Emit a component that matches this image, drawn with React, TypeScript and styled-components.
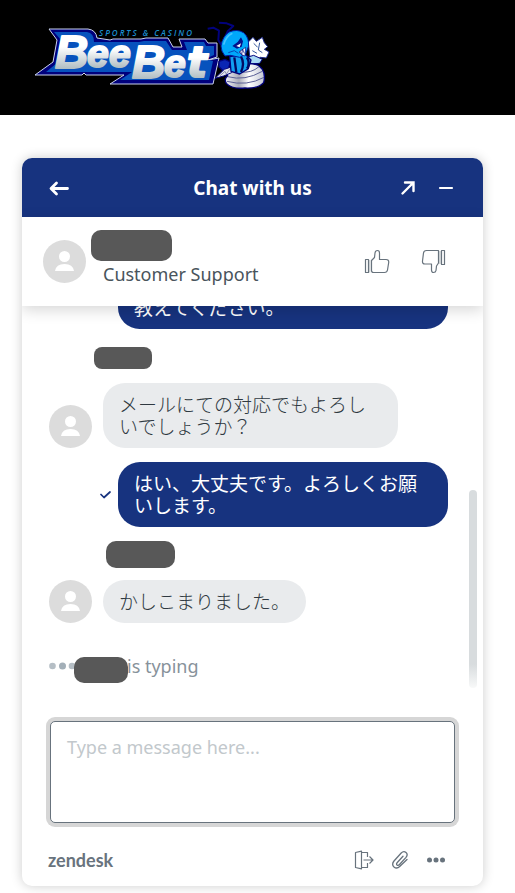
import React from "react";
import styled, { createGlobalStyle } from "styled-components";

const NAVY = "#17337f";
const SLATE = "#68737d";

const GlobalStyle = createGlobalStyle`
  *, *::before, *::after { box-sizing: border-box; }
  body {
    margin: 0;
    background: #fff;
    color: #2f3941;
    font-family: "Noto Sans", "Open Sans", "Noto Sans CJK JP", sans-serif;
    font-size: 18px;
    line-height: 22px;
  }
  button, textarea { font: inherit; color: inherit; }
`;

const Page = styled.div`
  display: flex;
  flex-direction: column;
  height: 100vh;
  min-height: 640px;
`;

const SiteHeader = styled.header`
  flex: none;
  padding: 20px 30px 22px;
  height: 115px;
  background: #000;
`;

const Main = styled.main`
  flex: 1;
  min-height: 0;
  display: flex;
  padding: 43px 32px 7px 22px;
`;

const Card = styled.section`
  flex: 1;
  min-width: 0;
  display: flex;
  flex-direction: column;
  border-radius: 10px;
  overflow: hidden;
  background: #fff;
  box-shadow: 0 0 12px rgba(0, 0, 0, 0.2);
`;

const TitleBar = styled.div`
  flex: none;
  display: grid;
  grid-template-columns: 76px 1fr 76px;
  align-items: center;
  height: 59px;
  padding: 0 29px 0 25px;
  background: ${NAVY};
  color: #fff;
`;

const Title = styled.h1`
  margin: 0;
  padding-left: 4px;
  text-align: center;
  font-size: 19px;
  line-height: 22px;
  font-weight: 700;
`;

const Actions = styled.div<{ $gap: number }>`
  display: flex;
  align-items: center;
  justify-content: flex-end;
  gap: ${(p) => p.$gap}px;
`;

const IconButton = styled.button`
  display: flex;
  width: max-content;
  padding: 0;
  border: 0;
  background: none;
  cursor: pointer;
`;

const AgentBar = styled.div`
  flex: none;
  position: relative;
  z-index: 1;
  display: flex;
  align-items: center;
  gap: 17px;
  height: 89px;
  padding: 0 36px 0 21px;
  background: #fff;
  box-shadow: 0 4px 14px rgba(0, 0, 0, 0.16);
`;

const AgentInfo = styled.div`
  flex: 1;
  display: flex;
  flex-direction: column;
  gap: 2px;
  padding-bottom: 8px;
`;

const NamePill = styled.span<{ $w: number; $h: number; $shift?: number }>`
  display: block;
  width: ${(p) => p.$w}px;
  height: ${(p) => p.$h}px;
  margin-left: ${(p) => p.$shift ?? 0}px;
  border-radius: ${(p) => (p.$h > 24 ? 10 : 8)}px;
  background: #585858;
`;

const Role = styled.div`
  color: #49545c;
`;

const Scroller = styled.div`
  flex: 1;
  min-height: 0;
  position: relative;
  overflow: hidden;
  display: flex;
  flex-direction: column;
  justify-content: flex-end;
  padding: 0 35px 38px 27px;
`;

const Row = styled.div<{ $own?: boolean }>`
  flex: none;
  display: flex;
  align-items: ${(p) => (p.$own ? "center" : "flex-end")};
  justify-content: ${(p) => (p.$own ? "flex-end" : "flex-start")};
  gap: ${(p) => (p.$own ? 7 : 11)}px;
`;

const Bubble = styled.p<{ $own?: boolean; $fill?: boolean }>`
  margin: 0;
  padding: 10px 16px 11px;
  flex: ${(p) => (p.$fill ? "1" : "0 1 auto")};
  max-width: ${(p) => (p.$own ? 330 : 295)}px;
  border-radius: 22px;
  background: ${(p) => (p.$own ? NAVY : "#e9ebed")};
  color: ${(p) => (p.$own ? "#fff" : "#2f3941")};
  font-family: "Noto Sans CJK JP", sans-serif;
  font-size: 19px;
  font-weight: ${(p) => (p.$own ? 400 : 300)};
  word-break: break-all;
`;

const Sender = styled.div<{ $indent: number; $top: number; $bottom: number }>`
  flex: none;
  padding: ${(p) => `${p.$top}px 0 ${p.$bottom}px ${p.$indent}px`};
`;

const Spacer = styled.div`
  flex: none;
  height: 14px;
`;

const Typing = styled.div`
  flex: none;
  position: relative;
  display: flex;
  align-items: center;
  margin-top: 30px;
  color: #87929b;
`;

const TypingName = styled.div`
  width: 53px;
  margin: 4px 0 -4px -3px;
`;

const Thumb = styled.div`
  position: absolute;
  right: 6px;
  bottom: 29px;
  width: 8px;
  height: 198px;
  border-radius: 4px;
  background: linear-gradient(#d8dcde 88%, #f8f9f9);
`;

const Composer = styled.label`
  flex: none;
  display: block;
  padding: 4px 28px 0;
`;

const Input = styled.textarea`
  display: block;
  width: 100%;
  height: 102px;
  padding: 14px 16px;
  border: 1px solid ${SLATE};
  border-radius: 5px;
  box-shadow: 0 0 0 4px #d6d6d6;
  outline: none;
  resize: none;
  background: #fff;
  line-height: 22px;
  &::placeholder { color: #c2c8cc; opacity: 1; }
`;

const Footer = styled.footer`
  flex: none;
  display: flex;
  align-items: center;
  justify-content: space-between;
  height: 63px;
  padding: 10px 37px 0 26px;
  color: ${SLATE};
`;

const Brand = styled.a`
  color: ${SLATE};
  text-decoration: none;
  font-family: Lato, sans-serif;
  font-weight: 700;
  font-size: 18px;
`;

const Logo = () => (
  <svg width="244" height="73" viewBox="30 20 244 73" role="img" aria-label="BeeBet Sports & Casino">
    <defs>
      <linearGradient id="metal" x1="0" y1="0" x2="0" y2="1">
        <stop offset="0.4" stopColor="#fff" />
        <stop offset="0.9" stopColor="#a3b2b8" />
      </linearGradient>
      <linearGradient id="drill" x1="0" y1="0" x2="1" y2="0">
        <stop offset="0" stopColor="#f4f4fa" />
        <stop offset="0.35" stopColor="#a9abb8" />
        <stop offset="0.6" stopColor="#fff" />
        <stop offset="1" stopColor="#c3c6d4" />
      </linearGradient>
    </defs>
    <path
      d="M49 29H88Q96 30 97 38L110 40L113 39H141L146 38H168L173 47H182L179 39H205L208 43H217V57L208 60L219 58L213 84H110L124 75H86L84 73L82 75H35L53 62L57 40Z"
      fill="#00007c"
      stroke="#c9d2ec"
      strokeWidth="1"
    />
    <path
      d="M54 32H87Q94 33 94 42H139L144 41H166L172 50H187L184 42H204L206 46H214V55L205 59L213 61L209 80H120L132 72H46L57 63L61 40Z"
      fill="#0752bd"
    />
    <g fontFamily="Liberation Sans, sans-serif" fontStyle="italic" fontWeight="700" fill="url(#metal)" stroke="url(#metal)" strokeWidth="2" strokeLinejoin="round">
      <text x="55" y="68" fontSize="46">B</text>
      <text x="87" y="67" fontSize="39">e</text>
      <text x="109" y="67" fontSize="39">e</text>
      <text x="132" y="78" fontSize="46">B</text>
      <text x="164" y="77" fontSize="39">e</text>
      <text x="187" y="77" fontSize="42" fontFamily="DejaVu Sans, sans-serif">t</text>
    </g>
    <text x="99" y="36" fontFamily="Open Sans, sans-serif" fontStyle="italic" fontWeight="600" fontSize="8" letterSpacing="2" fill="#1b8fd0">
      SPORTS &amp; CASINO
    </text>
    <g transform="translate(145 10) scale(0.33333)" strokeLinejoin="round">
      <path d="M228 104L220 90L222 62L205 53L188 56M240 82L248 64L265 48L245 40L222 38" fill="none" stroke="#02027c" strokeWidth="6" />
      <path d="M310 96L324 82L334 94L352 82L358 98L368 110L358 118L372 126L364 144L346 142L336 150L314 138Z" fill="#fff" stroke="#1b2a8c" strokeWidth="3" />
      <path d="M326 100L338 112M344 98L340 120L352 128M322 122L336 130" fill="none" stroke="#32549c" strokeWidth="3" />
      <path d="M306 142L326 136L352 148L344 160L318 162Z" fill="#a9d9f4" stroke="#02027c" strokeWidth="3" />
      <path d="M222 154L240 148L256 156L250 178L234 182L222 170Z" fill="#0a25b4" stroke="#02027c" strokeWidth="4" />
      <path d="M244 180Q300 150 340 166L352 178Q362 194 356 218Q340 236 300 234Q260 238 244 220Q236 206 248 198Z" fill="url(#drill)" stroke="#02027c" strokeWidth="4" />
      <path d="M248 200Q300 214 352 184M246 214Q306 230 357 202M286 186Q320 190 342 170" fill="none" stroke="#5a5f96" strokeWidth="3" />
      <path d="M210 205L238 178L268 168L260 188L236 198Z" fill="#e5e6ee" stroke="#02027c" strokeWidth="3" />
      <path d="M224 198L240 184L244 192L254 178" fill="none" stroke="#8a8eac" strokeWidth="3" />
      <path d="M254 140L300 132L318 150L310 176L284 192L258 184Z" fill="#12a0f0" stroke="#02027c" strokeWidth="4" />
      <path d="M268 142L274 188M288 140Q300 160 288 186M306 142Q316 160 306 176" fill="none" stroke="#020a62" strokeWidth="7" />
      <path d="M228 108Q232 80 252 66Q276 56 296 68Q314 84 310 110L302 132L284 142L256 136L240 138Q228 124 228 108Z" fill="#00a8fa" stroke="#0218a0" strokeWidth="3" />
      <path d="M236 104Q242 80 262 70" fill="none" stroke="#48c4ff" strokeWidth="5" />
      <path d="M262 108L278 96L288 82L294 94L290 110L276 116Z" fill="#03118b" />
      <path d="M274 108L288 100L284 112Z" fill="#fff" />
      <path d="M282 126L302 112L300 138L290 134Z" fill="#fff" stroke="#02027c" strokeWidth="2" />
      <path d="M286 124L290 134L293 118L298 130" fill="none" stroke="#02027c" strokeWidth="2" />
      <path d="M250 128L268 122L280 130" fill="none" stroke="#0645b4" strokeWidth="3" />
    </g>
  </svg>
);

const Avatar = () => (
  <svg width="43" height="43" viewBox="0 0 43 43" role="img" aria-label="Agent">
    <circle cx="21.5" cy="21.5" r="21.5" fill="#dcdcdc" />
    <circle cx="21.5" cy="16.5" r="5.5" fill="#fff" />
    <path d="M12 31Q13 24 21.5 24T31 31Z" fill="#fff" />
  </svg>
);

const BackIcon = () => (
  <svg width="26" height="20" viewBox="0 0 26 20" fill="none" stroke="#fff" strokeWidth="2.8" strokeLinecap="round" strokeLinejoin="round">
    <path d="M20.500 10.500H4.500M9.500 5L4 10.500L9.500 16" />
  </svg>
);

const PopoutIcon = () => (
  <svg width="16" height="16" viewBox="0 0 16 16" fill="none" stroke="#fff" strokeWidth="2.4" strokeLinecap="round">
    <path d="M2.500 13.500L13 3M5 2.500H13.500V11" />
  </svg>
);

const MinimizeIcon = () => (
  <svg width="16" height="16" viewBox="0 0 16 16" stroke="#fff" strokeWidth="2.2" strokeLinecap="round">
    <path d="M2 8H14" />
  </svg>
);

const ThumbUpIcon = () => (
  <svg width="26" height="26" viewBox="0 0 26 26" fill="none" stroke={SLATE} strokeWidth="1.2" strokeLinejoin="round">
    <path d="M4.500 11H6.500V23.500H4.500Z" fill="#d8dcde" stroke="none" />
    <path d="M1.500 10.500H4.500V23.500H1.500Z" />
    <path d="M7.500 11.500L10.500 8.500L11 4Q11.300 1.500 13.500 1.500Q15.500 1.500 15.500 4V10.500H22Q25 10.500 24.700 13.500L23.500 21Q23 23.500 20.500 23.500H9.500Q7.500 23.500 7.500 21.500Z" />
  </svg>
);

const ThumbDownIcon = () => (
  <svg width="26" height="26" viewBox="0 0 26 26" fill="none" stroke={SLATE} strokeWidth="1.2" strokeLinejoin="round">
    <path d="M17.500 2H20V15H17.500Z" fill="#d8dcde" stroke="none" />
    <path d="M20.500 1.500H23.500V15.500H20.500Z" />
    <path d="M17.500 14L15.500 17L15 21.500Q14.700 23.500 12.500 23.500Q10.500 23.500 10.500 21V15H4Q1.200 15 1.500 12L2.500 4Q2.800 1.500 5.500 1.500H17.500Z" />
  </svg>
);

const CheckIcon = () => (
  <svg width="11" height="9" viewBox="0 0 11 9" fill="none" stroke={NAVY} strokeWidth="1.7" strokeLinecap="round" strokeLinejoin="round" role="img" aria-label="Sent">
    <path d="M1 4.500L4 7.500L10 2" />
  </svg>
);

const TypingDots = () => (
  <svg width="28" height="8" viewBox="0 0 28 8">
    <circle cx="3.500" cy="4" r="3.300" fill="#b5bec5" />
    <circle cx="13.500" cy="4" r="3.500" fill="#a3afb8" />
    <circle cx="23" cy="4" r="3.300" fill="#b5bec5" />
  </svg>
);

const ExitIcon = () => (
  <svg width="20" height="20" viewBox="0 0 20 20" fill="none" stroke={SLATE} strokeWidth="1.2" strokeLinejoin="round">
    <path d="M1.500 2.500L7.500 1.200V18.800L1.500 17.500Z" />
    <path d="M7.500 2.500H13.500V7M13.500 13V17.500H7.500M9.500 10H19M15.500 6.500L19 10L15.500 13.500" />
  </svg>
);

const ClipIcon = () => (
  <svg width="18" height="20" viewBox="0 0 18 20" fill="none" stroke={SLATE} strokeWidth="1.3" strokeLinecap="round">
    <path d="M12 6.200L6.300 12.500Q5 14 6 15Q7.200 16 8.500 14.500L15 7.400Q17.300 4.600 15 2.500Q12.700 0.500 10.200 3L3 11Q0.300 14.300 3 17Q5.800 19.300 8.700 16.500L16 9.500" />
  </svg>
);

const MoreIcon = () => (
  <svg width="20" height="20" viewBox="0 0 20 20" fill={SLATE}>
    <circle cx="3.500" cy="10" r="2.500" />
    <circle cx="10" cy="10" r="2.500" />
    <circle cx="16.500" cy="10" r="2.500" />
  </svg>
);

export default function App() {
  return (
    <>
      <GlobalStyle />
      <Page>
        <SiteHeader>
          <Logo />
        </SiteHeader>
        <Main>
          <Card>
            <TitleBar>
              <IconButton aria-label="Back"><BackIcon /></IconButton>
              <Title>Chat with us</Title>
              <Actions $gap={22}>
                <IconButton aria-label="Open in new window"><PopoutIcon /></IconButton>
                <IconButton aria-label="Minimize"><MinimizeIcon /></IconButton>
              </Actions>
            </TitleBar>
            <AgentBar>
              <Avatar />
              <AgentInfo>
                <NamePill $w={81} $h={31} $shift={-12} />
                <Role>Customer Support</Role>
              </AgentInfo>
              <Actions $gap={31}>
                <IconButton aria-label="Rate good"><ThumbUpIcon /></IconButton>
                <IconButton aria-label="Rate bad"><ThumbDownIcon /></IconButton>
              </Actions>
            </AgentBar>
            <Scroller>
              <Row $own>
                <Bubble $own $fill>教えてください。</Bubble>
              </Row>
              <Sender $indent={45} $top={18} $bottom={14}>
                <NamePill $w={58} $h={22} />
              </Sender>
              <Row>
                <Avatar />
                <Bubble>メールにての対応でもよろしいでしょうか？</Bubble>
              </Row>
              <Spacer />
              <Row $own>
                <CheckIcon />
                <Bubble $own>はい、大丈夫です。よろしくお願いします。</Bubble>
              </Row>
              <Sender $indent={57} $top={14} $bottom={12}>
                <NamePill $w={69} $h={27} />
              </Sender>
              <Row>
                <Avatar />
                <Bubble>かしこまりました。</Bubble>
              </Row>
              <Typing>
                <TypingDots />
                <TypingName><NamePill $w={54} $h={26} /></TypingName>
                is typing
              </Typing>
              <Thumb />
            </Scroller>
            <Composer>
              <Input aria-label="Message" placeholder="Type a message here..." />
            </Composer>
            <Footer>
              <Brand href="#">zendesk</Brand>
              <Actions $gap={17}>
                <IconButton aria-label="End chat"><ExitIcon /></IconButton>
                <IconButton aria-label="Attach file"><ClipIcon /></IconButton>
                <IconButton aria-label="Options"><MoreIcon /></IconButton>
              </Actions>
            </Footer>
          </Card>
        </Main>
      </Page>
    </>
  );
}
